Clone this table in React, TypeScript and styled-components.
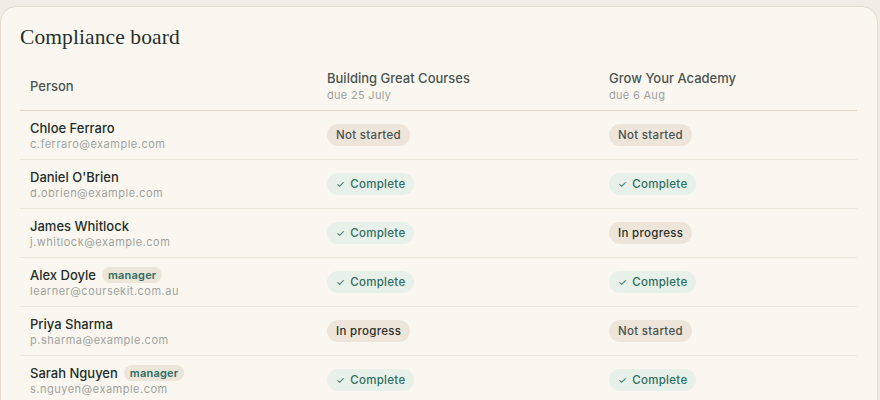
import React from "react";
import styled, { createGlobalStyle } from "styled-components";

const Global = createGlobalStyle`
  html, body { margin: 0; padding: 0; background: #f1ede6; }
  body { padding-top: 6px; font-family: "Inter", "Noto Sans", sans-serif; -webkit-font-smoothing: antialiased; }
`;

const Card = styled.section`
  margin-right: 2px;
  background: #faf7f1;
  border: 1px solid #e6dccb;
  border-radius: 16px;
  padding: 16px 20px 0 19px;
  min-height: 420px;
  box-sizing: border-box;
`;

const Title = styled.h1`
  margin: 0 0 7px 0;
  font-family: "Liberation Serif", "DejaVu Serif", serif;
  font-weight: 400;
  font-size: 21.5px;
  line-height: 28px;
  letter-spacing: 0.1px;
  color: #27302c;
`;

const Grid = styled.div`
  display: grid;
  grid-template-columns: 297px 282px 1fr;
`;

const HeadCell = styled.div`
  padding: 4px 10px 0;
  height: 53px;
  box-sizing: border-box;
  display: flex;
  flex-direction: column;
  justify-content: center;
  border-bottom: 1px solid #e2d6c2;
`;

const HeadLabel = styled.div`
  font-size: 13px;
  font-weight: 500;
  color: #4b5450;
  line-height: 17px;
`;

const HeadDue = styled.div`
  font-size: 11px;
  color: #9fa29c;
  line-height: 16px;
  letter-spacing: 0.3px;
`;

const Cell = styled.div`
  padding: 0 10px;
  height: 48px;
  display: flex;
  flex-direction: column;
  justify-content: center;
  align-items: flex-start;
  border-bottom: 1px solid #ede6da;
`;

const NameLine = styled.div`
  display: flex;
  align-items: center;
  gap: 6px;
  font-size: 13px;
  font-weight: 500;
  color: #252d2a;
  line-height: 18px;
`;

const Email = styled.div`
  font-size: 11px;
  color: #a0a39d;
  letter-spacing: 0.5px;
  line-height: 15px;
`;

const Tag = styled.span`
  display: inline-flex;
  align-items: center;
  height: 16px;
  padding: 0 6px;
  border-radius: 8px;
  background: #ece5da;
  color: #2f6d62;
  font-size: 11px;
  font-weight: 600;
  letter-spacing: 0.2px;
`;

type Status = "done" | "progress" | "none";

const Badge = styled.span<{ $s: Status }>`
  display: inline-flex;
  align-items: center;
  height: 22px;
  padding: 0 9px;
  border-radius: 11px;
  font-size: 11.5px;
  font-weight: 500;
  letter-spacing: 0.3px;
  background: ${(p) => (p.$s === "done" ? "#e8f0ea" : "#ede5da")};
  color: ${(p) => (p.$s === "done" ? "#2f6e5e" : p.$s === "progress" ? "#2a2f2c" : "#4a524e")};
`;

const Check = styled.span`
  font-weight: 400;
  font-size: 10px;
  margin-right: 5px;
`;

const label: Record<Status, string> = {
  done: "Complete",
  progress: "In progress",
  none: "Not started",
};

const rows: { name: string; email: string; manager?: boolean; a: Status; b: Status }[] = [
  { name: "Chloe Ferraro", email: "c.ferraro@example.com", a: "none", b: "none" },
  { name: "Daniel O'Brien", email: "d.obrien@example.com", a: "done", b: "done" },
  { name: "James Whitlock", email: "j.whitlock@example.com", a: "done", b: "progress" },
  { name: "Alex Doyle", email: "learner@coursekit.com.au", manager: true, a: "done", b: "done" },
  { name: "Priya Sharma", email: "p.sharma@example.com", a: "progress", b: "none" },
  { name: "Sarah Nguyen", email: "s.nguyen@example.com", manager: true, a: "done", b: "done" },
];

const StatusBadge = ({ s }: { s: Status }) => (
  <Badge $s={s}>
    {s === "done" && <Check>✓</Check>}
    {label[s]}
  </Badge>
);

export default function App() {
  return (
    <>
      <Global />
      <Card>
        <Title>Compliance board</Title>
        <Grid>
          <HeadCell>
            <HeadLabel>Person</HeadLabel>
          </HeadCell>
          <HeadCell>
            <HeadLabel>Building Great Courses</HeadLabel>
            <HeadDue>due 25 July</HeadDue>
          </HeadCell>
          <HeadCell>
            <HeadLabel>Grow Your Academy</HeadLabel>
            <HeadDue>due 6 Aug</HeadDue>
          </HeadCell>
          {rows.map((r) => (
            <React.Fragment key={r.email}>
              <Cell>
                <NameLine>
                  {r.name}
                  {r.manager && <Tag>manager</Tag>}
                </NameLine>
                <Email>{r.email}</Email>
              </Cell>
              <Cell>
                <StatusBadge s={r.a} />
              </Cell>
              <Cell>
                <StatusBadge s={r.b} />
              </Cell>
            </React.Fragment>
          ))}
        </Grid>
      </Card>
    </>
  );
}
